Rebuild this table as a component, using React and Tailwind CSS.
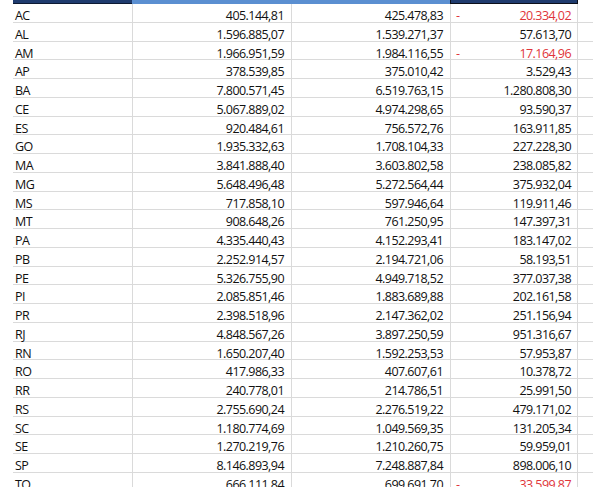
import React from "react";

const rows = [
  ["AC", "405.144,81", "425.478,83", "20.334,02", true],
  ["AL", "1.596.885,07", "1.539.271,37", "57.613,70"],
  ["AM", "1.966.951,59", "1.984.116,55", "17.164,96", true],
  ["AP", "378.539,85", "375.010,42", "3.529,43"],
  ["BA", "7.800.571,45", "6.519.763,15", "1.280.808,30"],
  ["CE", "5.067.889,02", "4.974.298,65", "93.590,37"],
  ["ES", "920.484,61", "756.572,76", "163.911,85"],
  ["GO", "1.935.332,63", "1.708.104,33", "227.228,30"],
  ["MA", "3.841.888,40", "3.603.802,58", "238.085,82"],
  ["MG", "5.648.496,48", "5.272.564,44", "375.932,04"],
  ["MS", "717.858,10", "597.946,64", "119.911,46"],
  ["MT", "908.648,26", "761.250,95", "147.397,31"],
  ["PA", "4.335.440,43", "4.152.293,41", "183.147,02"],
  ["PB", "2.252.914,57", "2.194.721,06", "58.193,51"],
  ["PE", "5.326.755,90", "4.949.718,52", "377.037,38"],
  ["PI", "2.085.851,46", "1.883.689,88", "202.161,58"],
  ["PR", "2.398.518,96", "2.147.362,02", "251.156,94"],
  ["RJ", "4.848.567,26", "3.897.250,59", "951.316,67"],
  ["RN", "1.650.207,40", "1.592.253,53", "57.953,87"],
  ["RO", "417.986,33", "407.607,61", "10.378,72"],
  ["RR", "240.778,01", "214.786,51", "25.991,50"],
  ["RS", "2.755.690,24", "2.276.519,22", "479.171,02"],
  ["SC", "1.180.774,69", "1.049.569,35", "131.205,34"],
  ["SE", "1.270.219,76", "1.210.260,75", "59.959,01"],
  ["SP", "8.146.893,94", "7.248.887,84", "898.006,10"],
  ["TO", "666.111,84", "699.691,70", "33.599,87", true],
];

const Row = ({ uf, a, b, c, neg }) => (
  <div className="grid grid-cols-[119px_159px_159px_128px] h-[18.75px] border-b border-[#dadada] leading-[24px]">
    <div className="pl-[2px]">{uf}</div>
    <div className="text-right pr-[7px] border-l border-[#dadada]">{a}</div>
    <div className="text-right pr-[7px] border-l border-[#dadada]">{b}</div>
    <div className={`flex justify-between pl-[5px] pr-[6px] border-l border-r border-[#dadada] ${neg ? "text-[#e0353a]" : ""}`}>
      <span>{neg ? "-" : ""}</span>
      <span>{c}</span>
    </div>
  </div>
);

export default function App() {
  return (
    <div className="w-[593px] h-[487px] overflow-hidden bg-white text-[#111] text-[12.5px] tracking-[-0.55px] font-['Open_Sans',sans-serif]">
      <div className="ml-[13px]">
        <div className="grid grid-cols-[119px_318px_128px] h-[4px]">
          <div className="bg-[#1f3b6e] border-b border-[#0d1a33]"></div>
          <div className="bg-[#5b8fd1]"></div>
          <div className="bg-[#1f3b6e] border border-t-0 border-[#0b0f1a]"></div>
        </div>
        {rows.map(([uf, a, b, c, neg]) => (
          <Row key={uf} uf={uf} a={a} b={b} c={c} neg={neg} />
        ))}
      </div>
    </div>
  );
}
